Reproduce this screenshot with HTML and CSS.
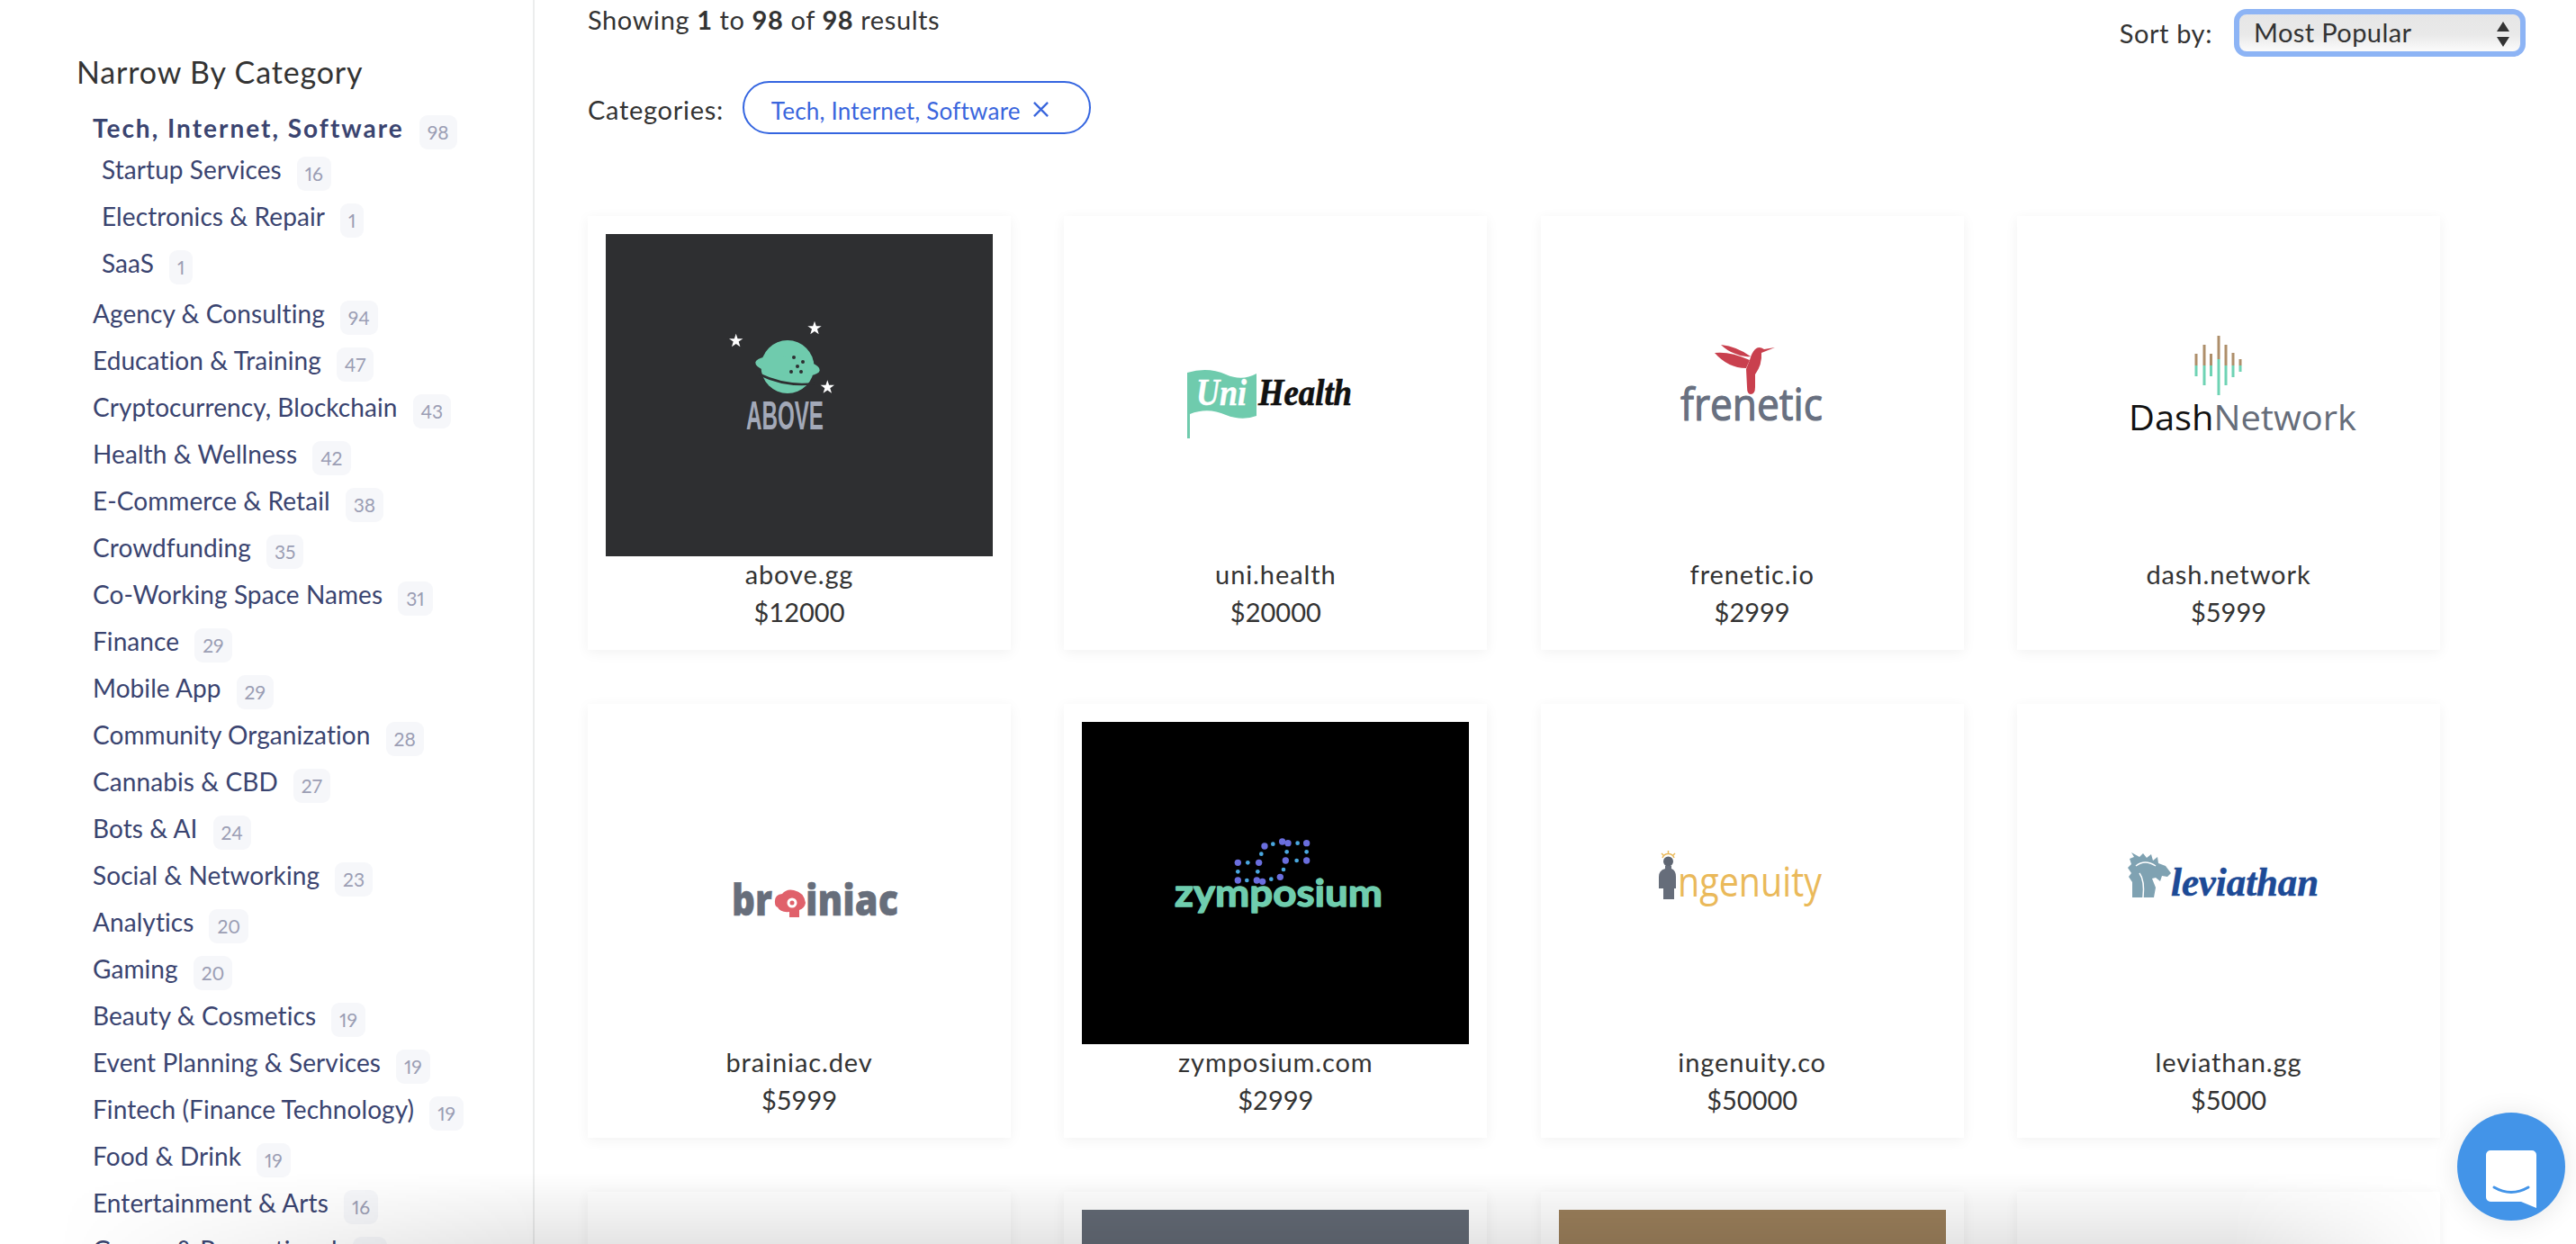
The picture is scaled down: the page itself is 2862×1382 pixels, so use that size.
FILE: index.html
```html
<!DOCTYPE html>
<html lang="en">
<head>
<meta charset="utf-8">
<title>Domains</title>
<link rel="stylesheet" href="styles.css">
</head>
<body>
<div class="page">
  <aside class="sidebar">
    <h2 class="side-title">Narrow By Category</h2>
    <ul class="cats">
      <li class="cat cat-active"><a>Tech, Internet, Software</a><span class="count">98</span></li>
      <li class="cat cat-sub"><a>Startup Services</a><span class="count">16</span></li>
      <li class="cat cat-sub"><a>Electronics &amp; Repair</a><span class="count">1</span></li>
      <li class="cat cat-sub cat-last-sub"><a>SaaS</a><span class="count">1</span></li>
      <li class="cat"><a>Agency &amp; Consulting</a><span class="count">94</span></li>
      <li class="cat"><a>Education &amp; Training</a><span class="count">47</span></li>
      <li class="cat"><a>Cryptocurrency, Blockchain</a><span class="count">43</span></li>
      <li class="cat"><a>Health &amp; Wellness</a><span class="count">42</span></li>
      <li class="cat"><a>E-Commerce &amp; Retail</a><span class="count">38</span></li>
      <li class="cat"><a>Crowdfunding</a><span class="count">35</span></li>
      <li class="cat"><a>Co-Working Space Names</a><span class="count">31</span></li>
      <li class="cat"><a>Finance</a><span class="count">29</span></li>
      <li class="cat"><a>Mobile App</a><span class="count">29</span></li>
      <li class="cat"><a>Community Organization</a><span class="count">28</span></li>
      <li class="cat"><a>Cannabis &amp; CBD</a><span class="count">27</span></li>
      <li class="cat"><a>Bots &amp; AI</a><span class="count">24</span></li>
      <li class="cat"><a>Social &amp; Networking</a><span class="count">23</span></li>
      <li class="cat"><a>Analytics</a><span class="count">20</span></li>
      <li class="cat"><a>Gaming</a><span class="count">20</span></li>
      <li class="cat"><a>Beauty &amp; Cosmetics</a><span class="count">19</span></li>
      <li class="cat"><a>Event Planning &amp; Services</a><span class="count">19</span></li>
      <li class="cat"><a>Fintech (Finance Technology)</a><span class="count">19</span></li>
      <li class="cat"><a>Food &amp; Drink</a><span class="count">19</span></li>
      <li class="cat"><a>Entertainment &amp; Arts</a><span class="count">16</span></li>
      <li class="cat"><a>Games &amp; Recreational</a><span class="count">15</span></li>
    </ul>
  </aside>

  <main class="main">
    <div class="toolbar">
      <div class="filters">
        <p class="showing">Showing <b>1</b> to <b>98</b> of <b>98</b> results</p>
        <div class="applied">
          <span class="applied-label">Categories:</span>
          <span class="pill">Tech, Internet, Software
            <svg class="pill-x" viewBox="0 0 20 20"><path d="M2 2 18 18M18 2 2 18"/></svg>
          </span>
        </div>
      </div>
      <div class="sort">
        <span class="sort-label">Sort by:</span>
        <div class="select-wrap">
          <select class="select"><option>Most Popular</option></select>
          <svg class="select-arrows" viewBox="0 0 14 28"><path d="M7 0 14 11H0ZM0 17H14L7 28Z"/></svg>
        </div>
      </div>
    </div>

    <div class="grid">
      <article class="card">
        <div class="thumb thumb-above">
          <svg class="logo" viewBox="0 0 430 358">
            <g fill="#fff">
              <polygon transform="translate(144.7 118.7) scale(1.15)" points="0,-7 1.6,-2.2 6.7,-2.2 2.6,.8 4.1,5.7 0,2.8 -4.1,5.7 -2.6,.8 -6.7,-2.2 -1.6,-2.2"/>
              <polygon transform="translate(232 104.7) scale(1.15)" points="0,-7 1.6,-2.2 6.7,-2.2 2.6,.8 4.1,5.7 0,2.8 -4.1,5.7 -2.6,.8 -6.7,-2.2 -1.6,-2.2"/>
              <polygon transform="translate(246.3 170.3) scale(1.15)" points="0,-7 1.6,-2.2 6.7,-2.2 2.6,.8 4.1,5.7 0,2.8 -4.1,5.7 -2.6,.8 -6.7,-2.2 -1.6,-2.2"/>
            </g>
            <circle cx="202" cy="147.500" r="29.500" fill="#6fcbad"/>
            <ellipse cx="202" cy="147" rx="36" ry="10.500" transform="rotate(7 202 147)" fill="#6fcbad"/>
            <path d="M171 156Q200 170 232 166" fill="none" stroke="#2e2f31" stroke-width="2.500"/>
            <g fill="#2e2f31">
              <circle cx="209" cy="137" r="2"/><circle cx="219" cy="142" r="2"/><circle cx="213" cy="147" r="2"/><circle cx="206" cy="153" r="2"/><circle cx="217" cy="153" r="2"/>
            </g>
            <text x="156" y="217" textLength="86" lengthAdjust="spacingAndGlyphs" class="t-above">ABOVE</text>
          </svg>
        </div>
        <h3 class="name">above.gg</h3>
        <p class="price">$12000</p>
      </article>

      <article class="card">
        <div class="thumb">
          <svg class="logo" viewBox="0 0 430 358">
            <path d="M117 154Q140 147 160 156Q178 164 194 155V202Q178 208 160 201Q140 192 120 200V227H117Z" fill="#6fcbad"/>
            <text x="127" y="190" textLength="56" lengthAdjust="spacingAndGlyphs" class="t-uni">Uni</text>
            <text x="196" y="190" textLength="104" lengthAdjust="spacingAndGlyphs" class="t-health">Health</text>
          </svg>
        </div>
        <h3 class="name">uni.health</h3>
        <p class="price">$20000</p>
      </article>

      <article class="card">
        <div class="thumb">
          <svg class="logo" viewBox="0 0 430 358">
            <g fill="#c9404e">
              <path d="M180 123Q198 125 213 136Q204 137 196 133Q187 130 180 123Z"/>
              <path d="M173 132Q190 130 212 140L208 149Q188 149 173 132Z"/>
              <path d="M240 126 228 128Q222 124 218 128Q214 132 212 140L208 150 209 170Q209 178 213 178Q218 178 218 170V156Q226 145 225 132Z"/>
            </g>
            <text x="135" y="207" textLength="158" lengthAdjust="spacingAndGlyphs" class="t-frenetic">frenetic</text>
          </svg>
        </div>
        <h3 class="name">frenetic.io</h3>
        <p class="price">$2999</p>
      </article>

      <article class="card">
        <div class="thumb">
          <svg class="logo" viewBox="0 0 430 358">
            <g stroke-width="3" stroke="#6fd3b4">
              <path d="M179 146V158M188 146V168M195.500 146V158M204 139V179M212 146V168M220 146V159M228 146V153"/>
              <path stroke="#ae8f6b" d="M179 133V146M188 123V146M195.500 133V146M204 113V139M212 123V146M220 132V146M228 139V146"/>
            </g>
            <text x="104" y="218" textLength="253" lengthAdjust="spacingAndGlyphs" class="t-dash"><tspan fill="#111">Dash</tspan><tspan fill="#666d7a">Network</tspan></text>
          </svg>
        </div>
        <h3 class="name">dash.network</h3>
        <p class="price">$5999</p>
      </article>

      <article class="card">
        <div class="thumb">
          <svg class="logo" viewBox="0 0 430 358">
            <text x="140" y="215" textLength="45" lengthAdjust="spacingAndGlyphs" class="t-brain">br</text>
            <text x="222" y="215" textLength="103" lengthAdjust="spacingAndGlyphs" class="t-brain">iniac</text>
            <path d="M188 201Q187 192 196 191Q201 185 209 187Q220 189 222 201Q221 207 215 209V217H204V211Q194 212 191 206Q188 205 188 201Z" fill="#e0616b"/>
            <circle cx="207" cy="201" r="4" fill="none" stroke="#fff" stroke-width="3"/>
          </svg>
        </div>
        <h3 class="name">brainiac.dev</h3>
        <p class="price">$5999</p>
      </article>

      <article class="card">
        <div class="thumb thumb-black">
          <svg class="logo" viewBox="0 0 430 358">
            <g transform="translate(57 118) scale(.3333)">
              <g fill="#6a6ede">
                <circle cx="349" cy="115" r="11"/><circle cx="419" cy="115" r="11"/><circle cx="349" cy="174" r="11"/><circle cx="412" cy="174" r="11"/><circle cx="431" cy="178" r="11"/><circle cx="490" cy="163" r="11"/><circle cx="438" cy="60" r="11"/><circle cx="497" cy="45" r="11"/><circle cx="516" cy="50" r="11"/><circle cx="578" cy="50" r="11"/><circle cx="508" cy="108" r="11"/><circle cx="578" cy="108" r="11"/>
              </g>
              <g fill="#4aa8e0">
                <circle cx="382" cy="115" r="7"/><circle cx="349" cy="145" r="7"/><circle cx="415" cy="145" r="7"/><circle cx="379" cy="174" r="7"/><circle cx="460" cy="170" r="7"/><circle cx="427" cy="86" r="7"/><circle cx="466" cy="53" r="7"/><circle cx="548" cy="50" r="7"/><circle cx="512" cy="79" r="7"/><circle cx="578" cy="79" r="7"/><circle cx="501" cy="138" r="7"/><circle cx="545" cy="108" r="7"/>
              </g>
            </g>
            <text x="103" y="205" textLength="231" lengthAdjust="spacingAndGlyphs" class="t-zym">zymposium</text>
          </svg>
        </div>
        <h3 class="name">zymposium.com</h3>
        <p class="price">$2999</p>
      </article>

      <article class="card">
        <div class="thumb">
          <svg class="logo" viewBox="0 0 430 358">
            <path d="M115 151A7 7 0 0 1 128 151M121.500 143V146M114 146 116 148M129 146 127 148" fill="none" stroke="#eab95a" stroke-width="1.500"/>
            <circle cx="121.500" cy="155" r="5.500" fill="#5f6672"/>
            <path d="M118 160H125V163Q130 165 130 172V185H128V197H116V185H111V172Q111 165 118 163Z" fill="#666d7a"/>
            <text x="132" y="194" textLength="160" lengthAdjust="spacingAndGlyphs" class="t-ingen">ngenuity</text>
          </svg>
        </div>
        <h3 class="name">ingenuity.co</h3>
        <p class="price">$50000</p>
      </article>

      <article class="card">
        <div class="thumb">
          <svg class="logo" viewBox="0 0 430 358">
            <path d="M108 195V178L104 172 107 168 103 162 107 158 105 152 110 150 107 145 116 150 120 146 124 151 129 147 131 154 136 150 137 157 145 160 151 168 147 172 141 171 139 177 134 173 130 174 134 184 132 195Z" fill="#7fa2b2"/>
            <path d="M112 160Q122 152 134 160M116 168Q122 176 120 195" fill="none" stroke="#fff" stroke-width="1.500"/>
            <text x="151" y="193" textLength="164" lengthAdjust="spacingAndGlyphs" class="t-levi">leviathan</text>
          </svg>
        </div>
        <h3 class="name">leviathan.gg</h3>
        <p class="price">$5000</p>
      </article>

      <article class="card"></article>
      <article class="card"><div class="thumb thumb-slate"></div></article>
      <article class="card"><div class="thumb thumb-tan"></div></article>
      <article class="card"></article>
    </div>
  </main>
</div>

<div class="fade"></div>

<button class="chat" aria-label="Chat">
  <svg class="chat-icon" viewBox="0 0 56 64">
    <path d="M5 0H51A5 5 0 0 1 56 5V64L39 57H5A5 5 0 0 1 0 52V5A5 5 0 0 1 5 0Z" fill="#fff"/>
    <path d="M9 41Q28 52 47 41" fill="none" stroke="#4394e8" stroke-width="3" stroke-linecap="round"/>
  </svg>
</button>
</body>
</html>
```

FILE: styles.css
```css
* { box-sizing: border-box; }
html, body { margin: 0; height: 100%; overflow: hidden; background: #fff; }
body { font-family: "Lato", "Open Sans", sans-serif; color: #333; }

.page { display: flex; height: 1382px; overflow: hidden; }

/* Sidebar */
.sidebar {
  width: 594px;
  flex: none;
  border-right: 2px solid #eceded;
  padding: 57px 0 0 85px;
  overflow: hidden;
}
.side-title {
  margin: 0 0 25px;
  font-size: 34px;
  line-height: 46px;
  font-weight: 400;
  color: #333;
  letter-spacing: .85px;
}
.cats { list-style: none; margin: 0; padding: 0 0 0 18px; }
.cat { display: flex; align-items: flex-start; height: 52px; color: #3a4470; font-size: 28px; letter-spacing: .08px; }
.cat a { line-height: 40px; margin-top: -6px; }
.count {
  margin-left: 17px;
  height: 38px;
  padding: 0 9px;
  border-radius: 9px;
  background: #f6f7fa;
  color: #9b9eb4;
  font-size: 21px;
  line-height: 38px;
  letter-spacing: 0;
  font-variant-numeric: proportional-nums;
}
.cat-active { height: 46px; }
.cat-active a { font-weight: 700; letter-spacing: 2px; }
.cat-sub { padding-left: 10px; }
.cat-last-sub { height: 56px; }

/* Main */
.main { flex: 1; min-width: 0; padding: 0 0 0 59px; }
.toolbar { display: flex; justify-content: space-between; height: 240px; }
.showing { margin: 0; font-size: 29px; line-height: 44px; color: #333; letter-spacing: .6px; }
.showing b { font-weight: 700; }
.applied { display: flex; align-items: center; margin-top: 46px; gap: 21px; }
.applied-label { font-size: 29px; letter-spacing: .7px; padding-top: 4px; }
.pill {
  display: inline-flex;
  align-items: center;
  gap: 13px;
  height: 59px;
  padding: 7px 44px 0 30px;
  border: 2px solid #3465e0;
  border-radius: 30px;
  color: #3a66dd;
  font-size: 26px;
  letter-spacing: .2px;
}
.pill-x { width: 19px; height: 19px; margin-top: -3px; fill: none; stroke: #3a66dd; stroke-width: 2.400; }

.sort { display: flex; align-items: center; gap: 24px; height: 53px; margin: 10px 56px 0 0; }
.sort-label { font-size: 29px; letter-spacing: .6px; }
.select-wrap { position: relative; width: 324px; height: 53px; }
.select {
  appearance: none;
  -webkit-appearance: none;
  display: block;
  width: 100%;
  height: 100%;
  padding: 0 0 2px 16px;
  border: 6px solid #8db4f5;
  border-radius: 14px;
  outline: 0;
  background: linear-gradient(#e6e6e6, #e9e9e9 55%, #fbfbfb);
  color: #333;
  font: 400 29px "Lato", sans-serif;
  letter-spacing: .4px;
}
.select-arrows { position: absolute; top: 14px; right: 18px; width: 14px; height: 28px; fill: #333; }

/* Grid */
.grid { display: grid; grid-template-columns: repeat(4, 470px); column-gap: 59.330px; row-gap: 60px; }
.card {
  height: 482px;
  padding: 20px;
  background: #fff;
  box-shadow: 0 3px 14px rgba(0, 0, 0, .055);
  text-align: center;
}
.thumb { height: 358px; background: #fff; }
.thumb-above { background: #2e2f31; }
.thumb-black { background: #000; }
.thumb-slate { background: #636a75; }
.thumb-tan { background: #9b7f5b; }
.logo { display: block; width: 430px; height: 358px; }
.name { margin: 0; font-size: 29px; line-height: 40px; font-weight: 400; color: #333; letter-spacing: .9px; }
.price { margin: 2px 0 0; font-size: 29px; line-height: 40px; color: #333; }

/* Logo wordmarks */
.t-above { font: 700 44px "Liberation Sans", sans-serif; fill: #a3a9b8; }
.t-uni { font: italic 700 42px "Liberation Serif", serif; fill: #fff; stroke: #fff; stroke-width: .5px; }
.t-health { font: italic 700 42px "Liberation Serif", serif; fill: #111; stroke: #111; stroke-width: .7px; }
.t-frenetic { font: 400 50px "Open Sans", sans-serif; fill: #687080; stroke: #687080; stroke-width: 1.200px; stroke-linejoin: round; }
.t-dash { font: 400 38px "Open Sans", sans-serif; }
.t-brain { font: 800 48px "Open Sans", sans-serif; fill: #676e7b; stroke: #676e7b; stroke-width: .5px; }
.t-zym { font: 700 42px "Lato", sans-serif; fill: #6fcdae; stroke: #6fcdae; stroke-width: 1.400px; stroke-linejoin: round; }
.t-ingen { font: 400 46px "Open Sans", sans-serif; fill: #eab95a; }
.t-levi { font: italic 700 44px "Liberation Serif", serif; fill: #1d4a96; stroke: #1d4a96; stroke-width: .6px; }

/* Overlays */
.fade {
  position: fixed;
  left: 0;
  right: 0;
  bottom: 0;
  height: 80px;
  pointer-events: none;
  background: linear-gradient(to top, rgba(0, 0, 0, .1), rgba(0, 0, 0, 0));
  -webkit-mask-image: linear-gradient(to right, transparent 60px, #000 600px, #000 2480px, transparent 2720px);
  mask-image: linear-gradient(to right, transparent 60px, #000 600px, #000 2480px, transparent 2720px);
}
.chat {
  position: fixed;
  left: 2730px;
  top: 1236px;
  width: 120px;
  height: 120px;
  padding: 28px 0 0 32px;
  border: 0;
  border-radius: 50%;
  background: #4394e8;
  box-shadow: 0 2px 30px rgba(0, 0, 0, .1);
}
.chat-icon { display: block; width: 56px; height: 64px; }
```
